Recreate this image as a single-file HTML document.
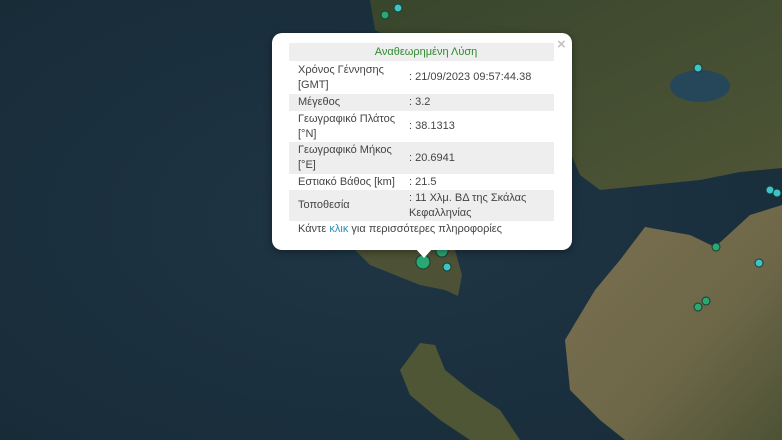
<!DOCTYPE html>
<html><head><meta charset="utf-8"><style>
body{margin:0;width:782px;height:440px;overflow:hidden;background:#1b2f3c;font-family:"Liberation Sans",sans-serif;position:relative}
svg{position:absolute;left:0;top:0}
.pop{position:absolute;left:272px;top:33px;width:300px;height:217px;background:#fff;border-radius:10px;box-shadow:0 2px 8px rgba(0,0,0,.4)}
.tip{position:absolute;left:415px;top:248px;width:0;height:0;border-left:9px solid transparent;border-right:9px solid transparent;border-top:10px solid #fff}
.x{position:absolute;left:557px;top:36px;color:#c3c3c3;font-size:15px;font-weight:bold}
table{position:absolute;left:289px;top:43px;width:265px;border-collapse:collapse;font-size:11px;color:#444}
td{padding:0 0 0 9px;line-height:15px;vertical-align:middle}
tr.g td{background:#eee}
td.v{padding-left:1px}
.h td{text-align:center;color:#2f8a2f;height:18px;font-size:11px}
.lnk{position:absolute;left:298px;top:223px;font-size:11px;color:#444}
.lnk span{color:#2a8fbd}
</style></head><body>
<svg width="782" height="440" viewBox="0 0 782 440">
<defs>
<radialGradient id="sea" cx="0.5" cy="0.5" r="0.8"><stop offset="0" stop-color="#1f3646"/><stop offset="1" stop-color="#172a36"/></radialGradient>
<linearGradient id="land" x1="0" y1="0" x2="1" y2="1"><stop offset="0" stop-color="#38462c"/><stop offset="1" stop-color="#4f5536"/></linearGradient>
<linearGradient id="pel" x1="0" y1="0" x2="1" y2="1"><stop offset="0" stop-color="#7a7050"/><stop offset="0.6" stop-color="#6d6748"/><stop offset="1" stop-color="#4d5235"/></linearGradient>
</defs>
<rect width="782" height="440" fill="url(#sea)"/>
<path d="M370,0 L782,0 L782,168 L740,172 L700,180 L650,185 L600,190 L580,175 L565,140 L555,90 L540,50 L500,35 L470,40 L440,45 L420,45 L395,40 L375,30 Z" fill="url(#land)"/>
<path d="M782,205 L750,215 L715,247 L690,235 L645,227 L620,260 L595,290 L565,340 L570,390 L600,420 L625,440 L782,440 Z" fill="url(#pel)"/>
<path d="M355,250 L380,245 L420,248 L455,250 L462,275 L458,296 L445,290 L420,285 L395,275 L370,265 Z" fill="#4d5236"/>
<path d="M420,343 L435,345 L445,370 L470,390 L500,410 L520,440 L470,440 L440,420 L410,395 L400,370 Z" fill="#4f5636"/>
<ellipse cx="700" cy="86" rx="30" ry="16" fill="#26465a"/>
<g stroke="#1a3a30" stroke-width="1">
<circle cx="398" cy="8" r="4" fill="#3cc4c8"/>
<circle cx="385" cy="15" r="4" fill="#2aa872"/>
<circle cx="698" cy="68" r="4" fill="#3cc4c8"/>
<circle cx="770" cy="190" r="4" fill="#3cc4c8"/>
<circle cx="777" cy="193" r="4" fill="#3cc4c8"/>
<circle cx="716" cy="247" r="4" fill="#2aa872"/>
<circle cx="759" cy="263" r="4" fill="#3cc4c8"/>
<circle cx="706" cy="301" r="4" fill="#2aa872"/>
<circle cx="698" cy="307" r="4" fill="#2aa872"/>
<circle cx="442" cy="251" r="6" fill="#2aa872"/>
<circle cx="423" cy="262" r="7" fill="#2aa872"/>
<circle cx="447" cy="267" r="4" fill="#3cc4c8"/>
</g>
</svg>
<div class="pop"></div><div class="tip"></div>
<div class="x">×</div>
<table>
<tr class="g h"><td colspan="2">Αναθεωρημένη Λύση</td></tr>
<tr style="height:33px"><td style="width:110px">Χρόνος Γέννησης<br>[GMT]</td><td class="v">: 21/09/2023 09:57:44.38</td></tr>
<tr class="g" style="height:17px"><td>Μέγεθος</td><td class="v">: 3.2</td></tr>
<tr style="height:31px"><td>Γεωγραφικό Πλάτος<br>[°N]</td><td class="v">: 38.1313</td></tr>
<tr class="g" style="height:32px"><td>Γεωγραφικό Μήκος<br>[°E]</td><td class="v">: 20.6941</td></tr>
<tr style="height:16px"><td>Εστιακό Βάθος [km]</td><td class="v">: 21.5</td></tr>
<tr class="g" style="height:31px"><td>Τοποθεσία</td><td class="v">: 11 Χλμ. ΒΔ της Σκάλας<br>Κεφαλληνίας</td></tr>
</table>
<div class="lnk">Κάντε <span>κλικ</span> για περισσότερες πληροφορίες</div>
</body></html>
